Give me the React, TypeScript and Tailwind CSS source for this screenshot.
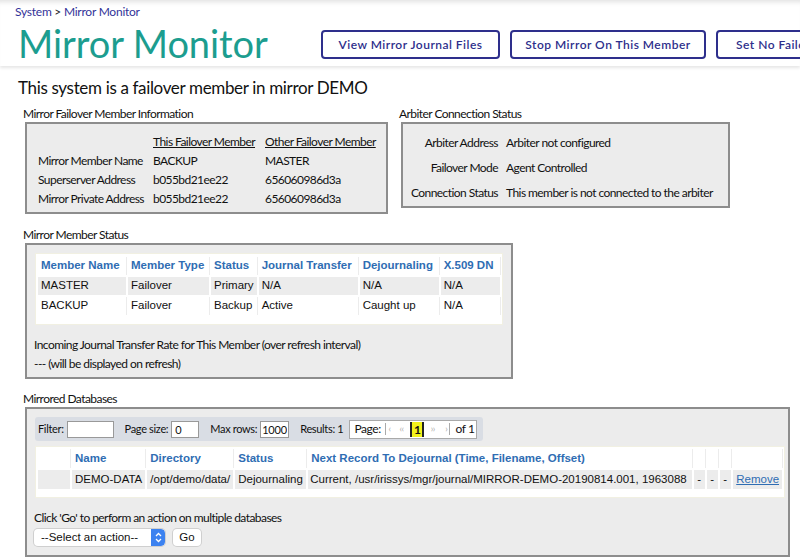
import React from "react";

const label = "text-[12px] text-[#111] leading-[12px]";

function Box({ className = "", children }: { className?: string; children: React.ReactNode }) {
  return (
    <div className={"ml-[2px] border-2 border-[#8d8d8d] bg-[#ececec] " + className}>{children}</div>
  );
}

function MemberStatus() {
  const head = ["Member Name", "Member Type", "Status", "Journal Transfer", "Dejournaling", "X.509 DN"];
  const rows = [
    ["MASTER", "Failover", "Primary", "N/A", "N/A", "N/A"],
    ["BACKUP", "Failover", "Backup", "Active", "Caught up", "N/A"],
  ];
  const widths = ["w-[88px]", "w-[81px]", "w-[45px]", "w-[99px]", "w-[79px]", "w-[59px]"];
  return (
    <div className="w-fit bg-white border border-[#f1f0e2] pt-[1px] pb-[7px]">
      <table className="table-fixed border-separate border-spacing-[2px] font-['Liberation_Sans',Arial,sans-serif] text-[11.5px] tracking-normal">
        <thead>
          <tr>
            {head.map((h, i) => (
              <th
                key={h}
                className={"h-[18px] px-[3px] text-left font-bold text-[#2f6db3] whitespace-nowrap shadow-[1px_0_0_#ececec] " + widths[i]}
              >
                {h}
              </th>
            ))}
          </tr>
        </thead>
        <tbody>
          {rows.map((r, ri) => (
            <tr key={ri}>
              {r.map((c, i) => (
                <td
                  key={i}
                  className={
                    "h-[18px] px-[3px] text-[#111] whitespace-nowrap " +
                    (ri === 0 ? "bg-[#ececec]" : "bg-white shadow-[1px_0_0_#ececec]")
                  }
                >
                  {c}
                </td>
              ))}
            </tr>
          ))}
        </tbody>
      </table>
    </div>
  );
}

function Pager() {
  return (
    <div className="flex items-center h-[19px] w-[128px] bg-white border border-[#a9a9a9] pl-[4px] text-[12px]">
      <span className="w-[31px]">Page:</span>
      <span className="text-[#aaa] text-[9px] w-[14px] border-l border-[#aaa] pl-[2px] leading-[12px]">‹</span>
      <span className="text-[#aaa] text-[9px] w-[11px] leading-[12px]">‹‹</span>
      <span className="bg-[#f2f21a] border-x-2 border-[#222] w-[14px] text-center font-bold text-[12px] leading-[15px]">1</span>
      <span className="text-[#aaa] text-[9px] w-[17px] text-center leading-[12px]">››</span>
      <span className="text-[#aaa] text-[9px] w-[9px] border-r border-[#aaa] text-right pr-[2px] leading-[12px]">›</span>
      <span className="ml-[5px]">of 1</span>
    </div>
  );
}

function Databases() {
  const head = ["", "Name", "Directory", "Status", "Next Record To Dejournal (Time, Filename, Offset)", "", "", "", ""];
  const widths = ["w-[32px]", "w-[73px]", "w-[85px]", "w-[71px]", "w-[384px]", "w-[11px]", "w-[11px]", "w-[11px]", "w-[42px]"];
  const row = [
    "",
    "DEMO-DATA",
    "/opt/demo/data/",
    "Dejournaling",
    "Current, /usr/irissys/mgr/journal/MIRROR-DEMO-20190814.001, 1963088",
    "-",
    "-",
    "-",
  ];
  return (
    <div className="w-fit bg-white border border-[#f1f0e2] pb-[6px]">
      <table className="table-fixed border-separate border-spacing-[2px] font-['Liberation_Sans',Arial,sans-serif] text-[11.5px] tracking-normal">
        <thead>
          <tr>
            {head.map((h, i) => (
              <th
                key={i}
                className={
                  "h-[19px] px-[3px] text-left font-bold text-[#2f6db3] whitespace-nowrap shadow-[1px_0_0_#ececec] " +
                  widths[i]
                }
              >
                {h}
              </th>
            ))}
          </tr>
        </thead>
        <tbody>
          <tr>
            {row.map((c, i) => (
              <td
                key={i}
                className={
                  "h-[19px] bg-[#ececec] text-[#111] whitespace-nowrap " + (i === 4 ? "px-[2px]" : "px-[3px]")
                }
              >
                {c}
              </td>
            ))}
            <td className="h-[19px] px-[3px] bg-[#ececec]">
              <a className="text-[#2f6db3] underline">Remove</a>
            </td>
          </tr>
        </tbody>
      </table>
    </div>
  );
}

export default function App() {
  return (
    <div className="w-[800px] h-[558px] overflow-hidden bg-white font-['Lato',sans-serif] text-[#111]">
      <header className="relative h-[66px] shadow-[inset_0_6px_5px_-4px_rgba(0,0,0,0.12),0_2px_3px_rgba(0,0,0,0.1)]">
        <div className="pl-[15px] pt-[5px] text-[12px] leading-[14px] tracking-[-0.02em]">
          <span className="text-[#333399]">System</span>
          <span className="text-[#222]"> &gt; </span>
          <span className="text-[#333399]">Mirror Monitor</span>
        </div>
        <div className="flex items-center pl-[18px] mt-[4px]">
          <h1 className="text-[38px] leading-[40px] text-[#1c9d8f] tracking-[-0.002em] whitespace-nowrap w-[303px] shrink-0">
            Mirror Monitor
          </h1>
          <div className="flex gap-[10px] mt-[3px]">
            {["View Mirror Journal Files", "Stop Mirror On This Member", "Set No Failover"].map((b, i) => (
              <button
                key={b}
                className={
                  "h-[29px] border-2 border-[#2e2f8c] rounded-[4px] text-[12px] text-[#2e2f8c] font-semibold tracking-[0.04em] whitespace-nowrap shrink-0 " +
                  (i === 0 ? "w-[179px]" : i === 1 ? "w-[196px]" : "w-[180px] text-left pl-[18px]")
                }
              >
                {b}
              </button>
            ))}
          </div>
        </div>
      </header>

      <main className="pl-[18px] pt-[11px]">
        <h2 className="text-[17px] leading-[22px] tracking-[-0.02em]">This system is a failover member in mirror DEMO</h2>

        <div className="flex items-start mt-[9px] pl-[5px] tracking-[-0.035em]">
          <section>
            <div className={label}>Mirror Failover Member Information</div>
            <Box className="mt-[2px] w-[363px] h-[92px] pl-[11px] pt-[8px]">
              <table className="text-[12px] leading-[19px]">
                <tbody>
                  <tr>
                    <td className="w-[115px]"></td>
                    <td className="w-[112px] underline">This Failover Member</td>
                    <td className="underline">Other Failover Member</td>
                  </tr>
                  <tr>
                    <td>Mirror Member Name</td>
                    <td>BACKUP</td>
                    <td>MASTER</td>
                  </tr>
                  <tr>
                    <td>Superserver Address</td>
                    <td>b055bd21ee22</td>
                    <td>656060986d3a</td>
                  </tr>
                  <tr>
                    <td>Mirror Private Address</td>
                    <td>b055bd21ee22</td>
                    <td>656060986d3a</td>
                  </tr>
                </tbody>
              </table>
            </Box>
          </section>

          <section className="ml-[11px]">
            <div className={label}>Arbiter Connection Status</div>
            <Box className="mt-[2px] w-[329px] h-[86px] pt-[6px]">
              <table className="text-[12px] leading-[25px]">
                <tbody>
                  {[
                    ["Arbiter Address", "Arbiter not configured"],
                    ["Failover Mode", "Agent Controlled"],
                    ["Connection Status", "This member is not connected to the arbiter"],
                  ].map(([k, v]) => (
                    <tr key={k}>
                      <td className="w-[103px] text-right pr-[8px] whitespace-nowrap">{k}</td>
                      <td className="whitespace-nowrap">{v}</td>
                    </tr>
                  ))}
                </tbody>
              </table>
            </Box>
          </section>
        </div>

        <section className="mt-[15px] pl-[5px] tracking-[-0.035em]">
          <div className={label}>Mirror Member Status</div>
          <Box className="mt-[2px] w-[488px] h-[136px] pl-[8px] pt-[8px]">
            <MemberStatus />
            <div className="text-[12px] leading-[14px] mt-[13px] ml-[-1px]">
              Incoming Journal Transfer Rate for This Member (over refresh interval)
            </div>
            <div className="text-[12px] leading-[14px] mt-[5px] ml-[-1px]">--- (will be displayed on refresh)</div>
          </Box>
        </section>

        <section className="mt-[14px] pl-[5px] tracking-[-0.035em]">
          <div className={label}>Mirrored Databases</div>
          <Box className="mt-[2px] w-[765px] h-[150px] pl-[8px] pt-[8px]">
            <div className="flex items-center w-[448px] h-[24px] bg-[#d9dde4] rounded-[3px] pl-[3px] text-[11px] tracking-[-0.03em] whitespace-nowrap">
              <span>Filter:</span>
              <input className="ml-[3px] w-[47px] h-[17px] bg-white border border-[#999] outline-none" />
              <span className="ml-[11px]">Page size:</span>
              <input
                defaultValue="0"
                className="ml-[3px] w-[28px] h-[17px] bg-white border border-[#999] px-[3px] text-[11px] outline-none"
              />
              <span className="ml-[11px]">Max rows:</span>
              <input
                defaultValue="1000"
                className="ml-[3px] w-[29px] h-[17px] bg-white border border-[#999] px-[1px] text-[11px] tracking-[-0.02em] outline-none"
              />
              <span className="ml-[11px]">Results: 1</span>
              <div className="ml-[6px] tracking-[-0.035em]">
                <Pager />
              </div>
            </div>
            <div className="mt-[5px]">
              <Databases />
            </div>
            <div className="text-[12px] leading-[14px] mt-[13px] ml-[-1px]">
              Click 'Go' to perform an action on multiple databases
            </div>
            <div className="flex items-center gap-[8px] mt-[4px] ml-[-1px]">
              <div className="flex items-center w-[131px] h-[17px] bg-white rounded-[4px] shadow-[0_0_0_1px_#cfcfcf] font-['Liberation_Sans',Arial,sans-serif] text-[11.5px] tracking-normal overflow-hidden">
                <span className="flex-1 pl-[7px]">--Select an action--</span>
                <span className="w-[14px] h-full bg-[#3c82f0] flex items-center justify-center rounded-r-[4px]">
                  <svg width="7" height="11" viewBox="0 0 7 11" fill="none" stroke="white" strokeWidth="1.3">
                    <path d="M1 4 L3.5 1.5 L6 4" />
                    <path d="M1 7 L3.5 9.5 L6 7" />
                  </svg>
                </span>
              </div>
              <button className="h-[17px] w-[28px] bg-white rounded-[4px] shadow-[0_0_0_1px_#cfcfcf] font-['Liberation_Sans',Arial,sans-serif] text-[11.5px] tracking-normal">
                Go
              </button>
            </div>
          </Box>
        </section>
      </main>
    </div>
  );
}
